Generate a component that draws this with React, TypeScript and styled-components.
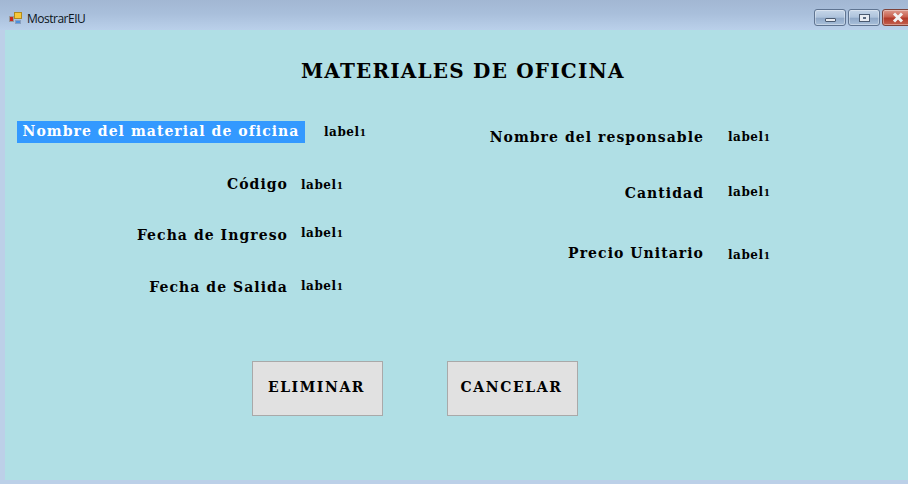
import React from "react";
import styled, { createGlobalStyle } from "styled-components";

const Global = createGlobalStyle`
  html, body { margin: 0; padding: 0; background: #bcd2ea; }
  #root { width: 908px; height: 484px; overflow: hidden; }
`;

const Win = styled.div`
  width: 908px;
  height: 484px;
  display: flex;
  flex-direction: column;
  background: #bcd0e8;
  overflow: hidden;
`;

const TitleBar = styled.div`
  height: 30px;
  flex: none;
  display: flex;
  align-items: center;
  padding: 6px 0 0 9px;
  box-sizing: border-box;
  background: linear-gradient(180deg, #a2b7d3 0%, #a9bfdb 45%, #bad0ea 100%);
`;

const AppTitle = styled.span`
  margin-left: 5px;
  font: 12px "Open Sans", "Liberation Sans", sans-serif;
  color: #0b1420;
  letter-spacing: -0.5px;
`;

const Controls = styled.div`
  margin-left: auto;
  margin-right: -6px;
  margin-top: -1px;
  display: flex;
  gap: 2px;
`;

const Ctl = styled.div<{ $close?: boolean }>`
  width: 32px;
  height: 17px;
  box-sizing: border-box;
  border: 1px solid ${p => (p.$close ? "#7d423a" : "#5f7491")};
  border-radius: 3px;
  display: flex;
  align-items: center;
  justify-content: center;
  background: ${p =>
    p.$close
      ? "linear-gradient(180deg,#dd9a8c 0%,#c9604f 45%,#b23a2a 55%,#c4604e 100%)"
      : "linear-gradient(180deg,#c6d6e9 0%,#aec3dc 48%,#90a9c8 55%,#a9c0da 100%)"};
  box-shadow: inset 0 0 0 1px rgba(255, 255, 255, 0.35);
`;

const MinGlyph = styled.div`
  width: 9px;
  height: 2px;
  margin-top: 4px;
  background: #e8ecf2;
  border: 1px solid #4a5a70;
  border-radius: 1px;
`;

const MaxGlyph = styled.div`
  width: 3px;
  height: 2px;
  border: solid #e8ecf2;
  border-width: 2px 3px;
  outline: 1px solid #4a5a70;
  background: #5a6a80;
`;

const Client = styled.main`
  flex: 1;
  margin: 0 0 4px 5px;
  background: #b0dfe5;
  font-family: "DejaVu Serif", serif;
  font-weight: 700;
  color: #000;
  display: flex;
  flex-direction: column;
`;

const Heading = styled.h1`
  margin: 28px 0 0;
  height: 26px;
  padding-left: 296px;
  box-sizing: border-box;
  font-size: 20px;
  line-height: 26px;
  font-weight: 700;
  white-space: nowrap;
  letter-spacing: 1.2px;
`;

const Columns = styled.div`
  display: flex;
  height: 277px;
`;

const Column = styled.div<{ $w: number; $top: number }>`
  width: ${p => p.$w}px;
  padding-top: ${p => p.$top}px;
  box-sizing: border-box;
`;

const Row = styled.div<{ $h: number; $labelW: number; $gap: number; $indent?: number }>`
  height: ${p => p.$h}px;
  margin-left: ${p => p.$indent ?? 0}px;
  display: flex;
  align-items: flex-start;
  gap: ${p => p.$gap}px;
  > :first-child { width: ${p => p.$labelW}px; }
`;

const Label = styled.span<{ $selected?: boolean }>`
  flex: none;
  text-align: right;
  height: 22px;
  line-height: 20px;
  font-size: 14px;
  letter-spacing: 1.05px;
  white-space: nowrap;
  box-sizing: border-box;
  ${p => p.$selected && `
    background: #3399ff;
    color: #fff;
    text-align: center;
  `}
`;

const Value = styled.span<{ $dy: number }>`
  font-size: 12px;
  line-height: 20px;
  letter-spacing: 0.55px;
  margin-top: ${p => p.$dy}px;
`;

const OldOne = styled.span`
  font-size: 9px;
  letter-spacing: 0;
`;

const Actions = styled.div`
  display: flex;
  gap: 64px;
  padding-left: 247px;
`;

const Btn = styled.button`
  width: 131px;
  height: 55px;
  box-sizing: border-box;
  border: 1px solid #a9a9a9;
  background: #e1e1e1;
  font-family: "DejaVu Serif", serif;
  font-weight: 700;
  font-size: 14px;
  letter-spacing: 1.6px;
  color: #000;
  padding: 0 2px 3px 0;
`;

const Logo = () => (
  <svg width="13" height="12" viewBox="0 0 13 12">
    <rect x="0.5" y="4.5" width="4" height="5" fill="#c8281e" stroke="#9a9a9a" />
    <rect x="5.5" y="0.5" width="7" height="6" fill="#f5c83c" stroke="#b08a20" />
    <rect x="6.5" y="8.5" width="5" height="3" fill="#4a90e0" stroke="#8aa0c0" />
  </svg>
);

const Lab = ({ dy }: { dy: number }) => (
  <Value $dy={dy}>label<OldOne>1</OldOne></Value>
);

export default function App() {
  return (
    <Win>
      <Global />
      <TitleBar>
        <Logo />
        <AppTitle>MostrarEIU</AppTitle>
        <Controls>
          <Ctl><MinGlyph /></Ctl>
          <Ctl><MaxGlyph /></Ctl>
          <Ctl $close>
            <svg width="14" height="11" viewBox="0 0 14 11">
              <path d="M3 1.5 L11 9.5 M11 1.5 L3 9.5" stroke="#f2f2f2" strokeWidth="3" />
            </svg>
          </Ctl>
        </Controls>
      </TitleBar>
      <Client>
        <Heading>MATERIALES DE OFICINA</Heading>
        <Columns>
          <Column $w={470} $top={37}>
            <Row $h={53} $labelW={288} $gap={19} $indent={12}>
              <Label $selected>Nombre del material de oficina</Label>
              <Lab dy={1} />
            </Row>
            <Row $h={51} $labelW={283} $gap={13}>
              <Label>Código</Label>
              <Lab dy={1} />
            </Row>
            <Row $h={52} $labelW={283} $gap={13}>
              <Label>Fecha de Ingreso</Label>
              <Lab dy={-2} />
            </Row>
            <Row $h={40} $labelW={283} $gap={13}>
              <Label>Fecha de Salida</Label>
              <Lab dy={-1} />
            </Row>
          </Column>
          <Column $w={433} $top={43}>
            <Row $h={56} $labelW={229} $gap={24}>
              <Label>Nombre del responsable</Label>
              <Lab dy={0} />
            </Row>
            <Row $h={60} $labelW={229} $gap={24}>
              <Label>Cantidad</Label>
              <Lab dy={-1} />
            </Row>
            <Row $h={40} $labelW={229} $gap={24}>
              <Label>Precio Unitario</Label>
              <Lab dy={2} />
            </Row>
          </Column>
        </Columns>
        <Actions>
          <Btn>ELIMINAR</Btn>
          <Btn>CANCELAR</Btn>
        </Actions>
      </Client>
    </Win>
  );
}
